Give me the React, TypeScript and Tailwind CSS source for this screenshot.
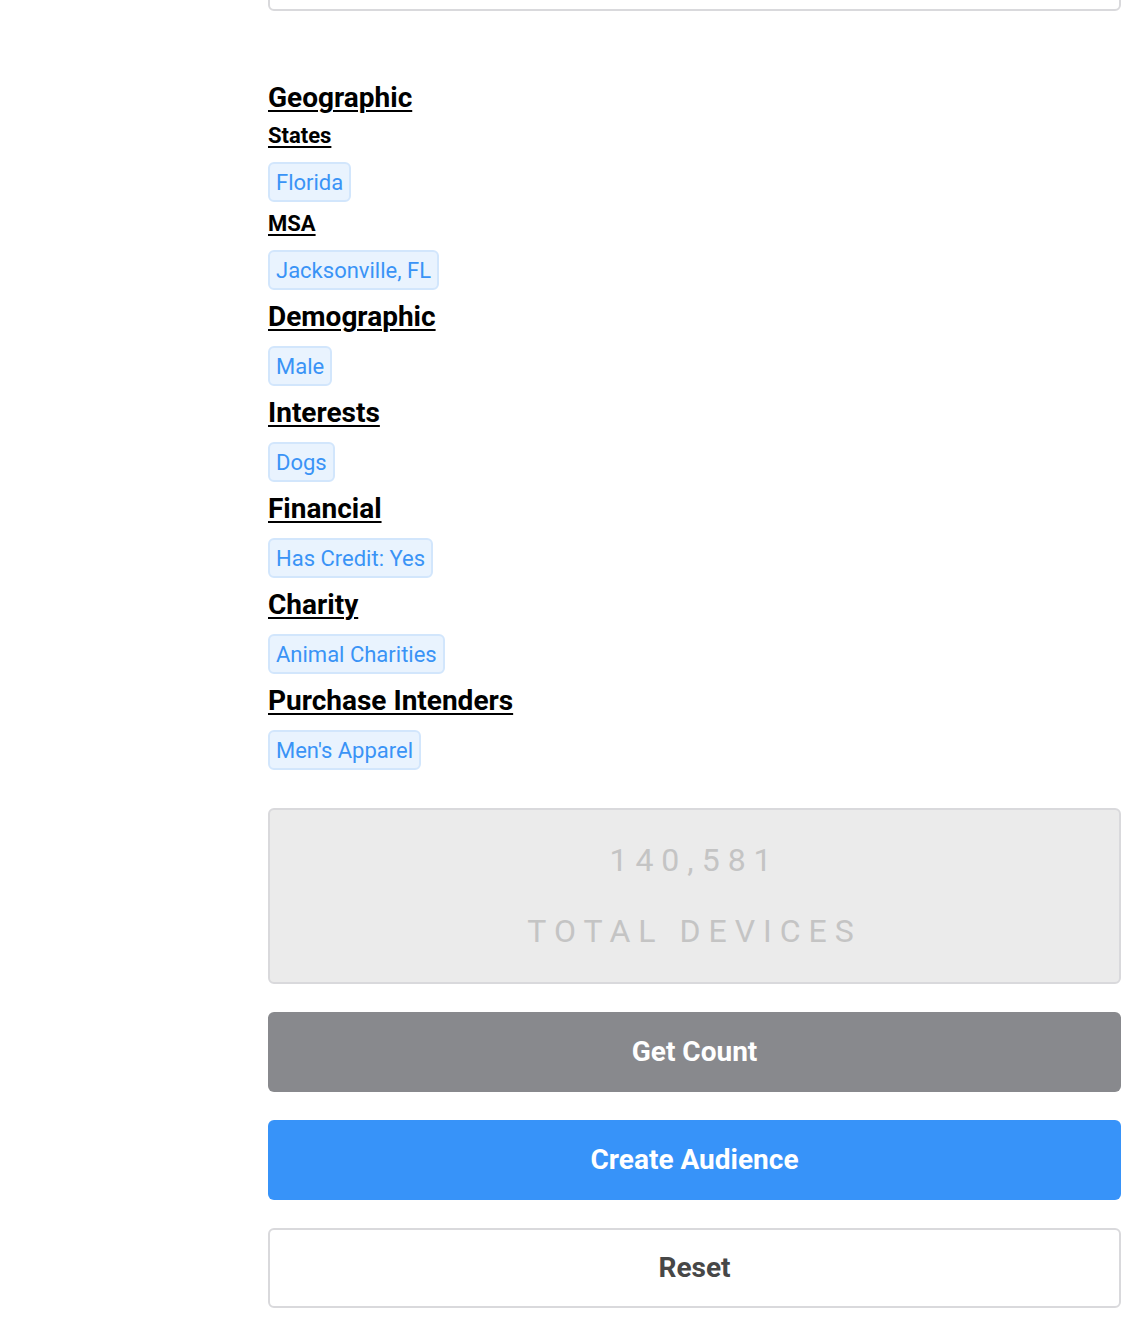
import React from 'react';

const sections: { title: string; groups: { label?: string; chips: string[] }[] }[] = [
  {
    title: 'Geographic',
    groups: [
      { label: 'States', chips: ['Florida'] },
      { label: 'MSA', chips: ['Jacksonville, FL'] },
    ],
  },
  { title: 'Demographic', groups: [{ chips: ['Male'] }] },
  { title: 'Interests', groups: [{ chips: ['Dogs'] }] },
  { title: 'Financial', groups: [{ chips: ['Has Credit: Yes'] }] },
  { title: 'Charity', groups: [{ chips: ['Animal Charities'] }] },
  { title: 'Purchase Intenders', groups: [{ chips: ["Men's Apparel"] }] },
];

const Chip = ({ text }: { text: string }) => (
  <div className="inline-flex h-10 items-center rounded-[6px] border-2 border-[#d2e6fc] bg-[#e9f3fe] px-[6px] text-[22px] text-[#3a93f6]">
    {text}
  </div>
);

export default function App() {
  return (
    <div className="min-h-screen overflow-hidden bg-white font-['Roboto','Liberation_Sans',sans-serif]">
      <div className="ml-[268px] w-[853px]">
        <div className="-mt-[50px] h-[61px] rounded-[6px] border-2 border-[#d9d9dc] bg-white" />

        <div className="mt-[72px]">
          {sections.map((s, i) => (
            <div key={s.title} className={i === 0 ? '' : 'mt-[12px]'}>
              <h2 className="text-[28px] font-bold leading-[30px] text-black underline decoration-2 underline-offset-[3px]">
                {s.title}
              </h2>
              {s.groups.map((g, j) => (
                <div key={j}>
                  {g.label ? (
                    <h3
                      className={`${j === 0 ? 'mt-[11px]' : 'mt-[10px]'} mb-[14px] text-[22px] font-bold leading-[24px] text-black underline underline-offset-[3px]`}
                    >
                      {g.label}
                    </h3>
                  ) : (
                    <div className="h-[14px]" />
                  )}
                  <div className="flex flex-wrap gap-2">
                    {g.chips.map((c) => (
                      <Chip key={c} text={c} />
                    ))}
                  </div>
                </div>
              ))}
            </div>
          ))}
        </div>

        <div className="mt-[38px] flex flex-col gap-[28px] pb-[12px]">
          <div className="flex h-[176px] flex-col items-center rounded-[6px] border-2 border-[#d9d9dc] bg-[#ebebeb] pt-[31px] text-[#c4c4c4]">
            <div className="text-[32px] leading-[38px] tracking-[8px]">140,581</div>
            <div className="mt-[33px] text-[32px] leading-[38px] tracking-[8px]">TOTAL DEVICES</div>
          </div>
          <button className="h-20 rounded-[6px] bg-[#88898d] text-[28px] font-bold text-white">Get Count</button>
          <button className="h-20 rounded-[6px] bg-[#3793f9] text-[28px] font-bold text-white">Create Audience</button>
          <button className="h-20 rounded-[6px] border-2 border-[#d9d9dc] bg-white text-[28px] font-bold text-[#474747]">
            Reset
          </button>
        </div>
      </div>
    </div>
  );
}
